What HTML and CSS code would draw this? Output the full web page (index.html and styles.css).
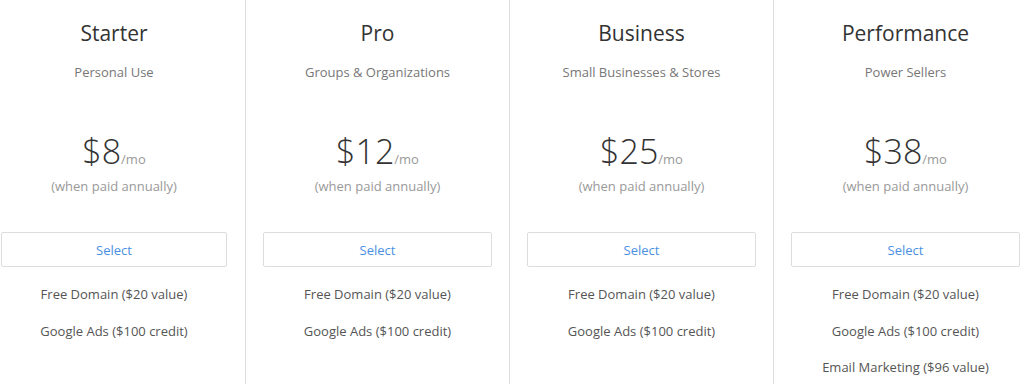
FILE: index.html
```html
<!DOCTYPE html>
<html>
<head>
<meta charset="utf-8">
<link rel="stylesheet" href="styles.css">
</head>
<body>
<div class="plans">
  <div class="plan">
    <h2 class="plan-name">Starter</h2>
    <p class="plan-desc">Personal Use</p>
    <div class="price"><span class="amount">$8</span><span class="per">/mo</span></div>
    <p class="note">(when paid annually)</p>
    <button class="select">Select</button>
    <ul class="features">
      <li>Free Domain ($20 value)</li>
      <li>Google Ads ($100 credit)</li>
    </ul>
  </div>
  <div class="plan">
    <h2 class="plan-name">Pro</h2>
    <p class="plan-desc">Groups &amp; Organizations</p>
    <div class="price"><span class="amount">$12</span><span class="per">/mo</span></div>
    <p class="note">(when paid annually)</p>
    <button class="select">Select</button>
    <ul class="features">
      <li>Free Domain ($20 value)</li>
      <li>Google Ads ($100 credit)</li>
    </ul>
  </div>
  <div class="plan">
    <h2 class="plan-name">Business</h2>
    <p class="plan-desc">Small Businesses &amp; Stores</p>
    <div class="price"><span class="amount">$25</span><span class="per">/mo</span></div>
    <p class="note">(when paid annually)</p>
    <button class="select">Select</button>
    <ul class="features">
      <li>Free Domain ($20 value)</li>
      <li>Google Ads ($100 credit)</li>
    </ul>
  </div>
  <div class="plan">
    <h2 class="plan-name">Performance</h2>
    <p class="plan-desc">Power Sellers</p>
    <div class="price"><span class="amount">$38</span><span class="per">/mo</span></div>
    <p class="note">(when paid annually)</p>
    <button class="select">Select</button>
    <ul class="features">
      <li>Free Domain ($20 value)</li>
      <li>Google Ads ($100 credit)</li>
      <li>Email Marketing ($96 value)</li>
    </ul>
  </div>
</div>
</body>
</html>
```

FILE: styles.css
```css
html, body {
  margin: 0;
  padding: 0;
  background: #fff;
  overflow: hidden;
}
body {
  font-family: "Open Sans", "Liberation Sans", sans-serif;
  color: #333;
}
.plans {
  display: grid;
  grid-template-columns: 263px repeat(3, 264px);
  margin-left: -18px;
  height: 384px;
}
.plan {
  display: flex;
  flex-direction: column;
  align-items: center;
  padding: 0 18px 0 19px;
  text-align: center;
}
.plan + .plan {
  border-left: 1px solid #ddd;
  padding: 0 17px;
}
.plan-name {
  margin: 20px 0 0;
  font-size: 21px;
  font-weight: 400;
  line-height: 26px;
  color: #333;
}
.plan-desc {
  margin: 17px 0 0;
  font-size: 13px;
  line-height: 18px;
  color: #777;
}
.price {
  margin-top: 50px;
  display: flex;
  align-items: baseline;
}
.amount {
  font-size: 34px;
  line-height: 40px;
  color: #333;
  font-weight: 300;
}
.per {
  font-size: 13px;
  color: #999;
}
.note {
  margin: 6px 0 0;
  font-size: 13px;
  line-height: 18px;
  color: #999;
}
.select {
  margin-top: 37px;
  width: 100%;
  height: 35px;
  background: #fff;
  border: 1px solid #ddd;
  border-radius: 2px;
  font-family: inherit;
  font-size: 13px;
  color: #4a90e2;
}
.features {
  list-style: none;
  margin: 18px 0 0;
  padding: 0;
  font-size: 13px;
  line-height: 18px;
  color: #555;
}
.features li + li {
  margin-top: 18.5px;
}
```
